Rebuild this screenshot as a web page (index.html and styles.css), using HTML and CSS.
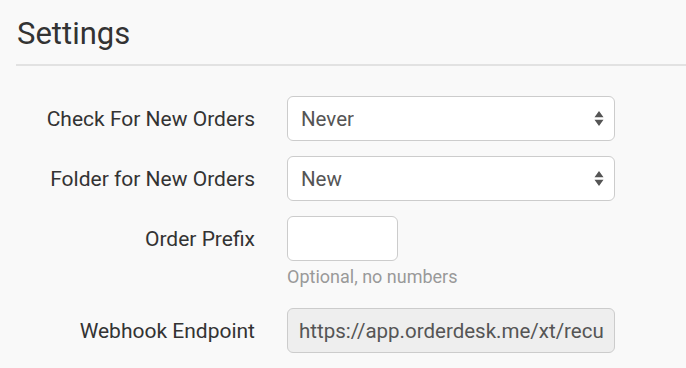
FILE: index.html
```html
<!DOCTYPE html>
<html>
<head>
<meta charset="utf-8">
<link rel="stylesheet" href="styles.css">
</head>
<body>
<div class="page">
  <h3 class="title">Settings</h3>
  <div class="rule"></div>
  <div class="form">
    <div class="label">Check For New Orders</div>
    <div class="control select">
      <span class="value">Never</span>
      <svg class="arrows" width="10" height="15" viewBox="0 0 10 15"><path d="M5 0 L9.5 6.2 L0.5 6.2 Z M0.5 8.8 L9.5 8.8 L5 15 Z" fill="#555"/></svg>
    </div>

    <div class="label">Folder for New Orders</div>
    <div class="control select">
      <span class="value">New</span>
      <svg class="arrows" width="10" height="15" viewBox="0 0 10 15"><path d="M5 0 L9.5 6.2 L0.5 6.2 Z M0.5 8.8 L9.5 8.8 L5 15 Z" fill="#555"/></svg>
    </div>

    <div class="label">Order Prefix</div>
    <div class="field">
      <div class="control short"></div>
      <div class="help">Optional, no numbers</div>
    </div>

    <div class="label">Webhook Endpoint</div>
    <div class="control disabled">
      <span class="value">https://app.orderdesk.me/xt/recu</span>
    </div>
  </div>
</div>
</body>
</html>
```
FILE: styles.css
```css
html, body {
  margin: 0;
  padding: 0;
  background: #f9f9f9;
}
body {
  font-family: Roboto, "Liberation Sans", sans-serif;
  color: #333;
}
.page {
  padding: 16px 0 0 16px;
  overflow: hidden;
}
.title {
  margin: 0 0 12px 1px;
  font-size: 31px;
  line-height: 36px;
  font-weight: 400;
  color: #333;
}
.rule {
  height: 2px;
  background: #e2e2e2;
}
.form {
  display: grid;
  grid-template-columns: 239px 328px;
  column-gap: 32px;
  row-gap: 15px;
  margin-top: 30px;
  align-items: start;
}
.label {
  height: 45px;
  display: flex;
  align-items: center;
  justify-content: flex-end;
  font-size: 21px;
  color: #333;
  white-space: nowrap;
}
.control {
  box-sizing: border-box;
  height: 45px;
  border: 1.5px solid #ccc;
  border-radius: 6px;
  background: #fff;
  display: flex;
  align-items: center;
  padding: 0 10px 0 13px;
  font-size: 20.5px;
  color: #555;
  overflow: hidden;
  white-space: nowrap;
}
.select {
  justify-content: space-between;
}
.arrows {
  flex: none;
}
.short {
  width: 111px;
}
.help {
  margin-top: 5px;
  margin-bottom: 5px;
  font-size: 18px;
  line-height: 22px;
  color: #999;
}
.disabled {
  background: #eee;
  padding-left: 11px;
  padding-right: 4px;
}
.value {
  overflow: hidden;
}
```
